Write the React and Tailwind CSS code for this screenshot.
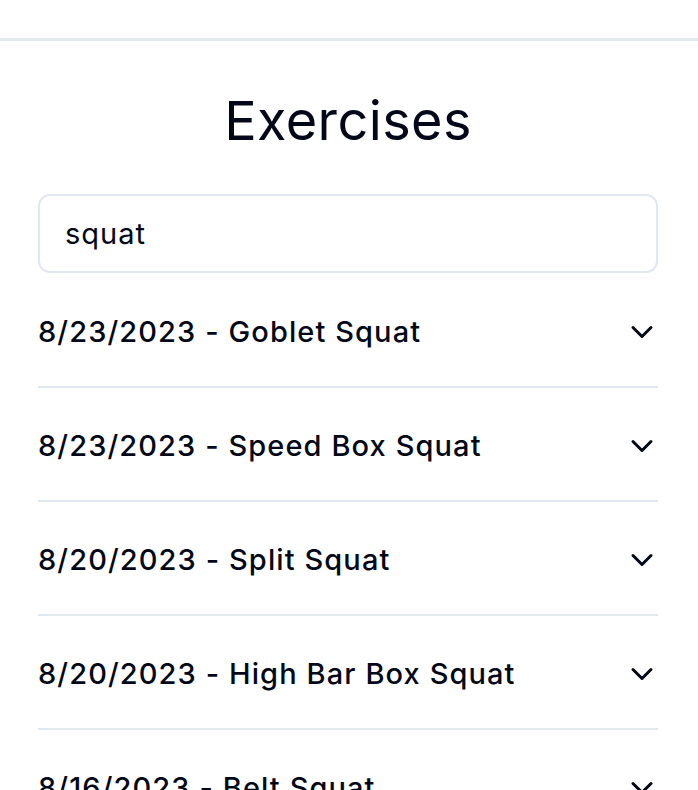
import React from 'react';
import { ChevronDown } from 'lucide-react';

const exercises = [
  { date: '8/23/2023', name: 'Goblet Squat' },
  { date: '8/23/2023', name: 'Speed Box Squat' },
  { date: '8/20/2023', name: 'Split Squat' },
  { date: '8/20/2023', name: 'High Bar Box Squat' },
  { date: '8/16/2023', name: 'Belt Squat' },
  { date: '8/16/2023', name: 'Front Squat' },
];

const ExerciseRow = ({ date, name }) => (
  <div className="flex h-[114px] items-center justify-between border-b-2 border-slate-200 pt-[4px]">
    <span className="text-[29px] font-medium tracking-[1.1px]">
      {date} - {name}
    </span>
    <ChevronDown size={36} strokeWidth={2} className="-mr-[2px]" />
  </div>
);

export default function App() {
  return (
    <div
      className="h-[790px] overflow-hidden bg-white text-[#020817]"
      style={{ fontFamily: 'Inter, "Noto Sans", sans-serif' }}
    >
      <div className="h-[41px] border-b-[3px] border-slate-200" />
      <main className="pl-[38px] pr-[40px]">
        <h1 className="mt-[40px] text-center text-[54px] leading-[80px] tracking-[0.4px]">Exercises</h1>
        <div className="mt-[33px] flex h-[79px] items-center rounded-xl border-2 border-slate-200 px-[25px]">
          <span className="text-[29px] tracking-[1px]">squat</span>
        </div>
        <div className="mt-[1px]">
          {exercises.map((ex, i) => (
            <ExerciseRow key={i} {...ex} />
          ))}
        </div>
      </main>
    </div>
  );
}
